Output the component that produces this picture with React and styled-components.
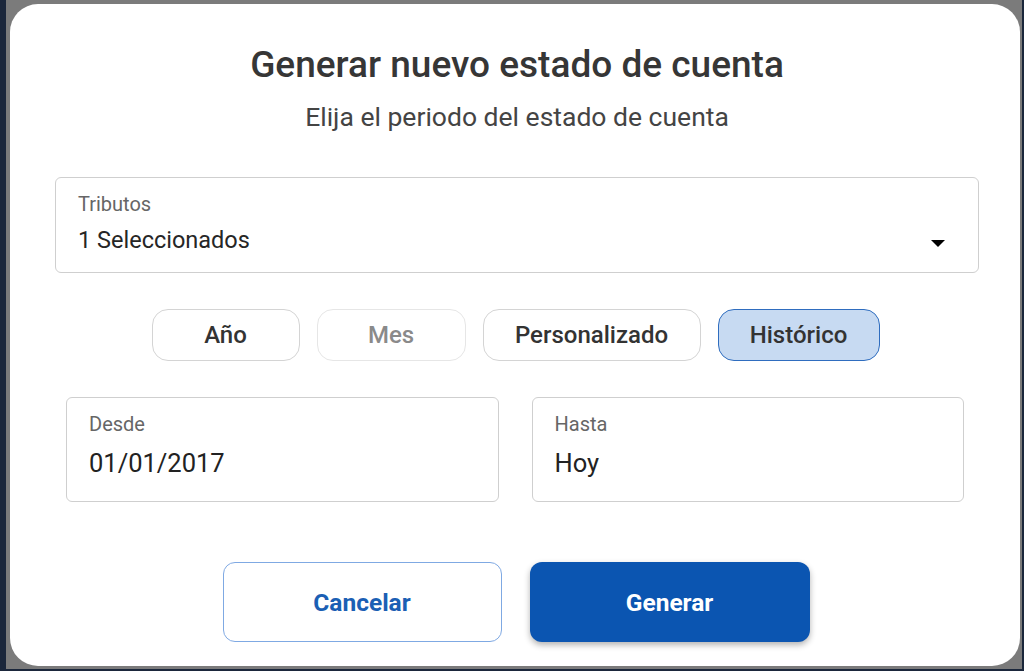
import { useState } from "react";
import styled, { createGlobalStyle } from "styled-components";

const GlobalStyle = createGlobalStyle`
  html, body {
    margin: 0;
    padding: 0;
    background: #1b273b;
    font-family: Roboto, "Liberation Sans", Arial, sans-serif;
  }
  * {
    box-sizing: border-box;
  }
`;

const periods = [
  { label: "Año", width: 148 },
  { label: "Mes", width: 149, disabled: true },
  { label: "Personalizado", width: 218 },
  { label: "Histórico", width: 162 },
];

function App() {
  const [period, setPeriod] = useState("Histórico");

  return (
    <>
      <GlobalStyle />
      <Backdrop>
        <Dialog>
          <Title>Generar nuevo estado de cuenta</Title>
          <Subtitle>Elija el periodo del estado de cuenta</Subtitle>

          <SelectBox>
            <FieldText>
              <FieldLabel>Tributos</FieldLabel>
              <SelectValue>1 Seleccionados</SelectValue>
            </FieldText>
            <svg width="14" height="7" viewBox="0 0 14 7">
              <path d="M0 0 L14 0 L7 7 Z" fill="#000" />
            </svg>
          </SelectBox>

          <ChipRow>
            {periods.map((p) => (
              <Chip
                key={p.label}
                type="button"
                $width={p.width}
                $active={period === p.label}
                disabled={p.disabled}
                onClick={() => setPeriod(p.label)}
              >
                {p.label}
              </Chip>
            ))}
          </ChipRow>

          <DateRow>
            <DateField>
              <FieldLabel>Desde</FieldLabel>
              <DateValue>01/01/2017</DateValue>
            </DateField>
            <DateField>
              <FieldLabel>Hasta</FieldLabel>
              <DateValue>Hoy</DateValue>
            </DateField>
          </DateRow>

          <Actions>
            <OutlineButton type="button">Cancelar</OutlineButton>
            <PrimaryButton type="button">Generar</PrimaryButton>
          </Actions>
        </Dialog>
      </Backdrop>
    </>
  );
}

export default App;

const Backdrop = styled.div`
  margin: 0 2px 0 6px;
  height: 669px;
  background: #7b7b7b;
  padding: 4px 2px 3px 4px;
`;

const Dialog = styled.div`
  height: 662px;
  background: #ffffff;
  border-radius: 28px;
  padding: 41px 41px 0 45px;
  display: flex;
  flex-direction: column;
`;

const Title = styled.h1`
  margin: 0;
  text-align: center;
  font-size: 37px;
  line-height: 40px;
  font-weight: 500;
  color: #363636;
`;

const Subtitle = styled.p`
  margin: 17px 0 0;
  text-align: center;
  font-size: 26.5px;
  line-height: 30px;
  font-weight: 400;
  color: #444;
`;

const SelectBox = styled.div`
  margin-top: 45px;
  height: 96px;
  border: 1px solid #cfcfcf;
  border-radius: 6px;
  padding: 16px 33px 0 22px;
  display: flex;
  align-items: flex-start;
  justify-content: space-between;

  svg {
    margin-top: 46px;
  }
`;

const FieldText = styled.div`
  display: flex;
  flex-direction: column;
`;

const FieldLabel = styled.span`
  font-size: 20px;
  line-height: 20px;
  color: #666;
`;

const SelectValue = styled.span`
  margin-top: 13px;
  font-size: 23.5px;
  line-height: 26px;
  color: #262626;
`;

const ChipRow = styled.div`
  margin-top: 36px;
  display: flex;
  justify-content: center;
  gap: 17px;
  padding-right: 3px;
`;

const Chip = styled.button`
  width: ${(p) => p.$width}px;
  height: 52px;
  border-radius: 16px;
  border: 1px solid ${(p) => (p.$active ? "#2f6dbf" : p.disabled ? "#e6e6e6" : "#d4d4d4")};
  background: ${(p) => (p.$active ? "#c7daf2" : "#fff")};
  color: ${(p) => (p.disabled ? "#8a8a8a" : "#333")};
  font-family: inherit;
  font-size: 24px;
  font-weight: 500;
  cursor: ${(p) => (p.disabled ? "default" : "pointer")};
  padding: 0;
`;

const DateRow = styled.div`
  margin: 36px 15px 0 11px;
  display: grid;
  grid-template-columns: 1fr 1fr;
  gap: 33px;
`;

const DateField = styled.div`
  height: 105px;
  border: 1px solid #cfcfcf;
  border-radius: 6px;
  padding: 16px 22px 0;
  display: flex;
  flex-direction: column;
`;

const DateValue = styled.span`
  margin-top: 16px;
  font-size: 25.5px;
  line-height: 26px;
  color: #222;
`;

const Actions = styled.div`
  margin-top: 60px;
  display: flex;
  justify-content: center;
  gap: 28px;
  padding-right: 2px;
`;

const OutlineButton = styled.button`
  width: 279px;
  height: 80px;
  border: 1px solid #7fa9e3;
  border-radius: 12px;
  background: #fff;
  color: #1b5fb4;
  font-family: inherit;
  font-size: 24.5px;
  font-weight: 700;
  cursor: pointer;
`;

const PrimaryButton = styled.button`
  width: 280px;
  height: 80px;
  border: none;
  border-radius: 12px;
  background: #0b55b1;
  color: #fff;
  font-family: inherit;
  font-size: 24.5px;
  font-weight: 700;
  cursor: pointer;
  box-shadow: 0 3px 6px rgba(0, 0, 0, 0.3);
`;
